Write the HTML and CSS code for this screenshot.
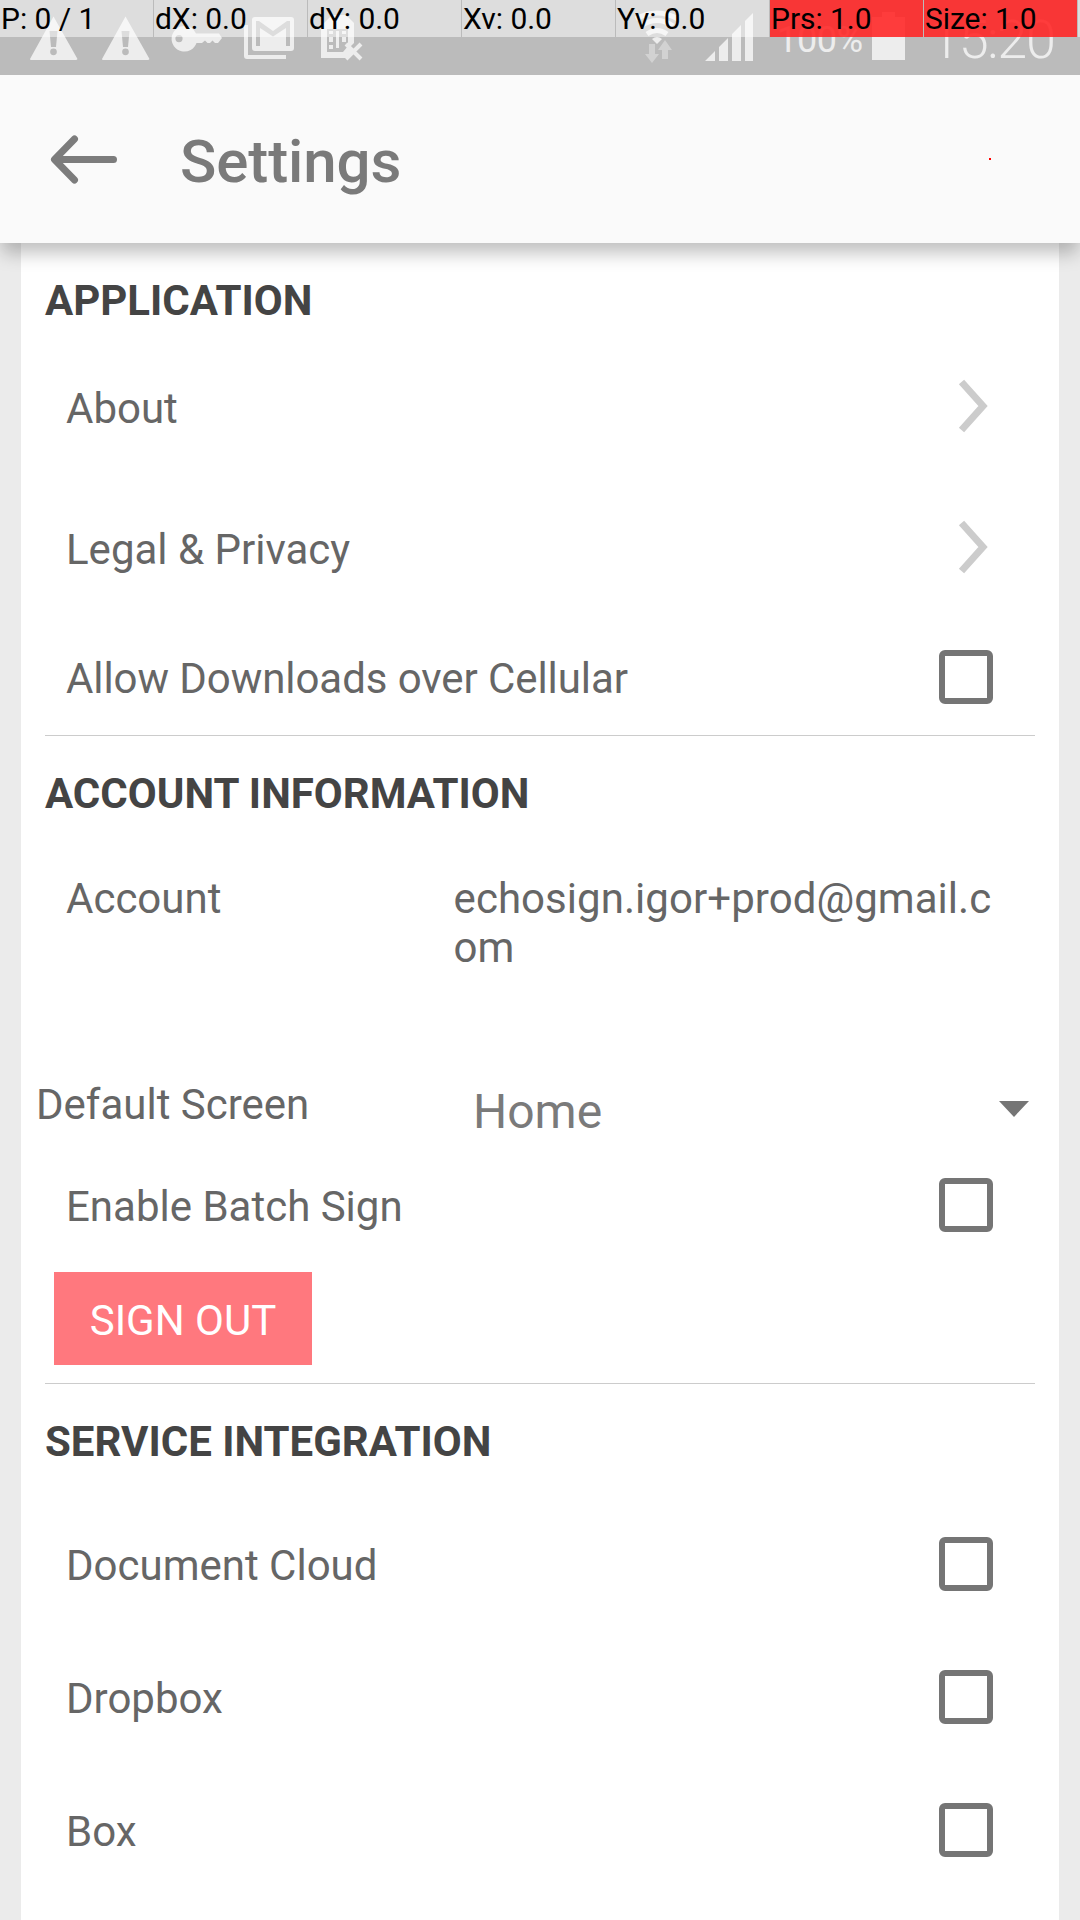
FILE: index.html
```html
<!DOCTYPE html>
<html lang="en">
<head>
<meta charset="utf-8">
<title>Settings</title>
<link rel="stylesheet" href="styles.css">
</head>
<body>
<div class="status-bar">
  <svg class="status-icons" width="1080" height="75" viewBox="0 0 1080 75" fill="#ededed">
    <path fill-rule="evenodd" d="M53.5 16.5L77.5 59Q77 60 76 60H31Q30 60 30 59ZM49.500 31L51 47H56L57.500 31ZM53.500 48.500A3.300 3.300 0 1 0 53.500 55.200A3.300 3.300 0 1 0 53.500 48.500Z"/>
    <path fill-rule="evenodd" d="M125.500 16.500L149.500 59Q149 60 148 60H103Q102 60 102 59ZM121.500 31L123 47H128L129.500 31ZM125.500 48.500A3.300 3.300 0 1 0 125.500 55.200A3.300 3.300 0 1 0 125.500 48.500Z"/>
    <path fill-rule="evenodd" d="M184.500 26A12.800 12.800 0 0 1 196 33.500H219L222 38L218 43H215L212.500 40.500L210 43H207.500L205 40.500L202 43H196.500A12.800 12.800 0 1 1 184.500 26ZM179 35A3.600 3.600 0 1 0 179 42.200A3.600 3.600 0 1 0 179 35Z"/>
    <path fill-rule="evenodd" d="M255 17H291Q294 17 294 20V48Q294 51 291 51H255Q252 51 252 48V20Q252 17 255 17ZM256 21V46H260V28L273 36.500L286 28V46H290V21H287L273 31L259 21Z"/>
    <path d="M244 25H248V55H286V59H247Q244 59 244 56Z"/>
    <path fill-rule="evenodd" d="M332 15H346L354 23V43L350 47L354 51L347 57L346 58H321V26ZM327 29V52H343L348 46V29ZM329 31H333V34H329ZM336 31H339V48H336ZM342 31H346V34H342ZM329 37H333V42H329ZM342 37H346V42H342ZM329 45H333V49H329Z"/>
    <path d="M346 44L361 59M361 44L346 59" stroke="#ededed" stroke-width="4"/>
    <g fill="none" stroke="#ededed" stroke-width="5">
      <path d="M636 19Q657 7 678 19"/><path d="M641 26Q657 15 673 26"/><path d="M647 34Q657 27 667 34"/>
    </g>
    <path d="M652 39Q657 35 662 39L657 44Z"/>
    <path fill="#d2d2d2" d="M649 44H655V54H659L652 63L645 54H649ZM662 59V50H658L665 40L672 50H668V59Z"/>
    <path d="M705 61L715 51V61ZM719 47L728 38V61H719ZM732 34L741 25V61H732ZM745 21L753 13V61H745Z"/>
    <path d="M882 12H895V17H905V60H872V17H882Z"/>
    <text class="battery-text" x="777" y="52">100%</text>
    <text class="clock-text" x="930" y="58">15:20</text>
  </svg>
  <div class="pointer-bar">
    <div class="probe">P: 0 / 1</div>
    <div class="probe">dX: 0.0</div>
    <div class="probe">dY: 0.0</div>
    <div class="probe">Xv: 0.0</div>
    <div class="probe">Yv: 0.0</div>
    <div class="probe probe-active">Prs: 1.0</div>
    <div class="probe probe-active">Size: 1.0</div>
  </div>
</div>

<header class="toolbar">
  <svg class="back" width="68" height="50" viewBox="0 0 68 50" fill="none" stroke="#7c7c7c" stroke-width="7" stroke-linecap="round" stroke-linejoin="round">
    <path d="M24.500 5L4.500 25.500L24.500 46M5 25.500H63.500"/>
  </svg>
  <h1 class="toolbar-title">Settings</h1>
  <span class="touch-point"></span>
</header>

<main class="card">
  <section class="group">
    <h2 class="group-title">APPLICATION</h2>
    <div class="row row-link"><span>About</span>
      <svg class="chevron" width="30" height="54" viewBox="0 0 30 54" fill="none" stroke="#ccc" stroke-width="7"><path d="M3.500 3L25 27L3.500 51"/></svg>
    </div>
    <div class="row row-link"><span>Legal &amp; Privacy</span>
      <svg class="chevron" width="30" height="54" viewBox="0 0 30 54" fill="none" stroke="#ccc" stroke-width="7"><path d="M3.500 3L25 27L3.500 51"/></svg>
    </div>
    <div class="row row-download"><span>Allow Downloads over Cellular</span><span class="checkbox"></span></div>
  </section>

  <section class="group">
    <h2 class="group-title">ACCOUNT INFORMATION</h2>
    <div class="account">
      <span>Account</span>
      <span class="account-email">echosign.igor+prod@gmail.com</span>
    </div>
    <div class="default-screen">
      <span>Default Screen</span>
      <div class="spinner">
        <span>Home</span>
        <svg class="caret" width="30" height="16" viewBox="0 0 30 16" fill="#757575"><path d="M0 0H30L15 16Z"/></svg>
      </div>
    </div>
    <div class="row row-batch"><span>Enable Batch Sign</span><span class="checkbox"></span></div>
    <button class="sign-out">SIGN OUT</button>
  </section>

  <section class="group">
    <h2 class="group-title group-title-services">SERVICE INTEGRATION</h2>
    <div class="row row-service"><span>Document Cloud</span><span class="checkbox"></span></div>
    <div class="row row-service"><span>Dropbox</span><span class="checkbox"></span></div>
    <div class="row row-service"><span>Box</span><span class="checkbox"></span></div>
  </section>
</main>
</body>
</html>
```
FILE: styles.css
```css
* {
  box-sizing: border-box;
}

body {
  margin: 0;
  height: 1920px;
  overflow: hidden;
  background: #ebebeb;
  color: #666;
  font: 42px/49px Roboto, sans-serif;
}

.status-bar {
  position: relative;
  height: 75px;
  background: #bbb;
}

.status-icons {
  display: block;
}

.battery-text {
  font-size: 36px;
  letter-spacing: -0.3px;
}

.clock-text {
  font-size: 54px;
  font-weight: 300;
  letter-spacing: -1.3px;
}

/* Pointer readout, drawn translucent over the status bar */
.pointer-bar {
  position: absolute;
  top: 0;
  left: 0;
  display: flex;
  gap: 1px;
}

.pointer-bar::after {
  content: "";
  width: 2px;
  background: rgba(255, 255, 255, 0.5);
}

.probe {
  width: 153px;
  height: 37px;
  padding-left: 1px;
  background: rgba(255, 255, 255, 0.5);
  color: #000;
  font-size: 30px;
  line-height: 37px;
  letter-spacing: -0.05px;
  white-space: nowrap;
}

.probe-active {
  background: rgba(255, 40, 40, 0.9);
}

.toolbar {
  position: relative;
  z-index: 1;
  display: flex;
  align-items: center;
  height: 168px;
  padding-left: 50px;
  background: #fafafa;
  box-shadow: 0 12px 17px -2px rgba(0, 0, 0, 0.25);
  clip-path: inset(0 0 -40px 0);
}

.toolbar-title {
  margin: 6px 0 0 62px;
  color: #7a7a7a;
  font-size: 60px;
  font-weight: 500;
  line-height: 70px;
  letter-spacing: -0.1px;
}

.touch-point {
  position: absolute;
  top: 83px;
  left: 989px;
  width: 2px;
  height: 2px;
  background: #f00;
}

.card {
  height: 1677px;
  margin: 0 21px;
  padding: 0 24px;
  background: #fff;
}

.group + .group {
  border-top: 1px solid #ccc;
}

.group-title {
  margin: 0;
  padding: 33px 0 13px;
  color: #444;
  font-size: 42px;
  font-weight: 700;
}

.group-title-services {
  padding-bottom: 33px;
}

.row {
  display: flex;
  align-items: center;
  justify-content: space-between;
  padding: 0 42px 0 21px;
}

.row-link {
  height: 141px;
}

.chevron {
  margin: 0 5px 5px 0;
}

.row-download {
  height: 113px;
  margin-top: 2px;
  letter-spacing: -0.07px;
}

.checkbox {
  width: 54px;
  height: 54px;
  margin-bottom: 3px;
  border: 6px solid #757575;
  border-radius: 6px;
}

.account {
  display: flex;
  height: 229px;
  padding: 43px 42px 0 21px;
}

.account > span:first-child {
  width: 388px;
}

.account-email {
  width: 540px;
  letter-spacing: 0.05px;
  word-break: break-all;
}

.default-screen {
  display: flex;
  height: 90px;
  padding-top: 20px;
  margin-left: -9px;
}

.default-screen > span {
  width: 437px;
}

.spinner {
  display: flex;
  flex: 1;
  align-items: center;
  justify-content: space-between;
  height: 56px;
  margin-top: 4px;
  padding-right: 6px;
  color: #7a7a7a;
  font-size: 48px;
  line-height: 56px;
}

.caret {
  margin-bottom: 6px;
}

.row-batch {
  height: 113px;
}

.sign-out {
  display: block;
  width: 258px;
  height: 93px;
  margin: 9px 0 18px 9px;
  padding: 4px 0 0;
  border: 0;
  background: #ff787e;
  color: #fff;
  font: 42px/49px Roboto, sans-serif;
}

.row-service {
  height: 133px;
}
```
